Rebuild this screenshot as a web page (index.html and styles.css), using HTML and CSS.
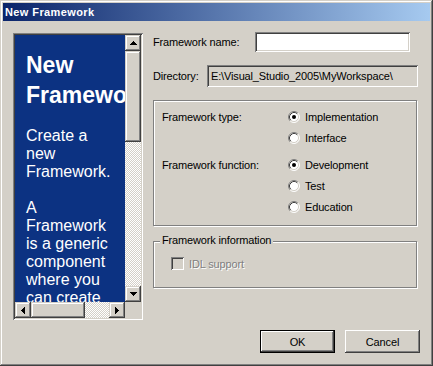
FILE: index.html
```html
<!DOCTYPE html>
<html>
<head>
<meta charset="utf-8">
<title>New Framework</title>
<link rel="stylesheet" href="styles.css">
</head>
<body>
<div class="window">
  <div class="titlebar"><span class="title">New Framework</span></div>
  <div class="client">
    <div class="main">
      <div class="preview">
        <div class="preview-view">
          <h1 class="preview-heading">New Framework</h1>
          <p class="preview-text">Create a new Framework.</p>
          <p class="preview-text">A Framework is a generic component where you can create</p>
        </div>
        <div class="vscroll">
          <div class="sb-btn"><svg width="7" height="4" viewBox="0 0 7 4"><path d="M3 0h1v1h1v1h1v1h1v1H0V3h1V2h1V1h1z"/></svg></div>
          <div class="sb-thumb vthumb"></div>
          <div class="sb-track"></div>
          <div class="sb-btn"><svg width="7" height="4" viewBox="0 0 7 4"><path d="M0 0h7v1H6v1H5v1H4v1H3V3H2V2H1V1H0z"/></svg></div>
        </div>
        <div class="hscroll">
          <div class="sb-btn"><svg width="4" height="7" viewBox="0 0 4 7"><path d="M3 0h1v7H3V6H2V5H1V4H0V3h1V2h1V1h1z"/></svg></div>
          <div class="sb-thumb hthumb"></div>
          <div class="sb-track"></div>
          <div class="sb-btn"><svg width="4" height="7" viewBox="0 0 4 7"><path d="M0 0h1v1h1v1h1v1h1v1H3v1H2v1H1v1H0z"/></svg></div>
        </div>
        <div class="sb-corner"></div>
      </div>
      <div class="form">
        <div class="field-row name-row">
          <span class="field-label name-label">Framework name:</span>
          <div class="textbox name-box"></div>
        </div>
        <div class="field-row dir-row">
          <span class="field-label dir-label">Directory:</span>
          <div class="textbox dir-box">E:\Visual_Studio_2005\MyWorkspace\</div>
        </div>
        <div class="group options">
          <div class="opt-section">
            <span class="opt-label">Framework type:</span>
            <div class="radio"><svg class="radio-icon" width="12" height="12" viewBox="0 0 12 12"><circle cx="6" cy="6" r="5" fill="#fff"/><path d="M2.11 9.89A5.5 5.5 0 0 1 9.89 2.11" stroke="#808080" fill="none"/><path d="M9.89 2.11A5.5 5.5 0 0 1 2.11 9.89" stroke="#fff" fill="none"/><path d="M2.82 9.18A4.5 4.5 0 0 1 9.18 2.82" stroke="#404040" fill="none"/><path d="M9.18 2.82A4.5 4.5 0 0 1 2.82 9.18" stroke="#d4d0c8" fill="none"/><circle cx="6" cy="6" r="2" fill="#000"/></svg><span>Implementation</span></div>
            <div class="radio"><svg class="radio-icon" width="12" height="12" viewBox="0 0 12 12"><circle cx="6" cy="6" r="5" fill="#fff"/><path d="M2.11 9.89A5.5 5.5 0 0 1 9.89 2.11" stroke="#808080" fill="none"/><path d="M9.89 2.11A5.5 5.5 0 0 1 2.11 9.89" stroke="#fff" fill="none"/><path d="M2.82 9.18A4.5 4.5 0 0 1 9.18 2.82" stroke="#404040" fill="none"/><path d="M9.18 2.82A4.5 4.5 0 0 1 2.82 9.18" stroke="#d4d0c8" fill="none"/></svg><span>Interface</span></div>
          </div>
          <div class="opt-section">
            <span class="opt-label">Framework function:</span>
            <div class="radio"><svg class="radio-icon" width="12" height="12" viewBox="0 0 12 12"><circle cx="6" cy="6" r="5" fill="#fff"/><path d="M2.11 9.89A5.5 5.5 0 0 1 9.89 2.11" stroke="#808080" fill="none"/><path d="M9.89 2.11A5.5 5.5 0 0 1 2.11 9.89" stroke="#fff" fill="none"/><path d="M2.82 9.18A4.5 4.5 0 0 1 9.18 2.82" stroke="#404040" fill="none"/><path d="M9.18 2.82A4.5 4.5 0 0 1 2.82 9.18" stroke="#d4d0c8" fill="none"/><circle cx="6" cy="6" r="2" fill="#000"/></svg><span>Development</span></div>
            <div class="radio"><svg class="radio-icon" width="12" height="12" viewBox="0 0 12 12"><circle cx="6" cy="6" r="5" fill="#fff"/><path d="M2.11 9.89A5.5 5.5 0 0 1 9.89 2.11" stroke="#808080" fill="none"/><path d="M9.89 2.11A5.5 5.5 0 0 1 2.11 9.89" stroke="#fff" fill="none"/><path d="M2.82 9.18A4.5 4.5 0 0 1 9.18 2.82" stroke="#404040" fill="none"/><path d="M9.18 2.82A4.5 4.5 0 0 1 2.82 9.18" stroke="#d4d0c8" fill="none"/></svg><span>Test</span></div>
            <div class="radio"><svg class="radio-icon" width="12" height="12" viewBox="0 0 12 12"><circle cx="6" cy="6" r="5" fill="#fff"/><path d="M2.11 9.89A5.5 5.5 0 0 1 9.89 2.11" stroke="#808080" fill="none"/><path d="M9.89 2.11A5.5 5.5 0 0 1 2.11 9.89" stroke="#fff" fill="none"/><path d="M2.82 9.18A4.5 4.5 0 0 1 9.18 2.82" stroke="#404040" fill="none"/><path d="M9.18 2.82A4.5 4.5 0 0 1 2.82 9.18" stroke="#d4d0c8" fill="none"/></svg><span>Education</span></div>
          </div>
        </div>
        <div class="group info">
          <span class="group-title">Framework information</span>
          <div class="check-row">
            <span class="checkbox"></span>
            <span class="check-label">IDL support</span>
          </div>
        </div>
      </div>
    </div>
    <div class="footer">
      <button class="btn btn-default">OK</button>
      <button class="btn">Cancel</button>
    </div>
  </div>
</div>
</body>
</html>
```

FILE: styles.css
```css
* { box-sizing: border-box; }

html, body {
  margin: 0;
  padding: 0;
  background: #d4d0c8;
}

body {
  font-family: "Liberation Sans", Arial, sans-serif;
  font-size: 11px;
  color: #000;
}

.window {
  width: 433px;
  height: 366px;
  padding: 3px;
  background: #d4d0c8;
  box-shadow: inset -1px -1px #404040, inset 1px 1px #d4d0c8, inset -2px -2px #808080, inset 2px 2px #fff;
  display: flex;
  flex-direction: column;
}

.titlebar {
  height: 18px;
  background: linear-gradient(to right, #0a246a, #a6caf0);
  display: flex;
  align-items: center;
  padding-left: 2px;
}

.title {
  color: #fff;
  font-weight: bold;
  font-size: 11px;
  letter-spacing: 0.4px;
  line-height: 13px;
}

.client {
  padding: 11px 10px 10px 10px;
  display: flex;
  flex-direction: column;
}

.main {
  display: flex;
  gap: 10px;
}

/* ---------- preview panel ---------- */
.preview {
  margin-top: 1px;
  width: 130px;
  height: 287px;
  padding: 2px;
  box-shadow: inset 1px 1px #808080, inset -1px -1px #fff, inset 2px 2px #404040, inset -2px -2px #d4d0c8;
  display: grid;
  grid-template-columns: 110px 16px;
  grid-template-rows: 267px 16px;
}

.preview-view {
  background: #0c3282;
  color: #fff;
  overflow: hidden;
  padding: 15px 0 0 11px;
}

.preview-heading {
  margin: 0 0 17px 0;
  width: 90px;
  font-size: 23px;
  line-height: 30px;
  font-weight: bold;
}

.preview-text {
  margin: 0 0 18px 0;
  width: 90px;
  font-size: 16px;
  line-height: 18px;
}

.vscroll {
  display: flex;
  flex-direction: column;
}

.hscroll {
  display: flex;
}

.sb-btn {
  flex: 0 0 16px;
  width: 16px;
  height: 16px;
  background: #d4d0c8;
  box-shadow: inset -1px -1px #404040, inset 1px 1px #d4d0c8, inset -2px -2px #808080, inset 2px 2px #fff;
  display: flex;
  align-items: center;
  justify-content: center;
}

.sb-btn svg {
  display: block;
  shape-rendering: crispEdges;
}

.sb-thumb {
  background: #d4d0c8;
  box-shadow: inset -1px -1px #404040, inset 1px 1px #d4d0c8, inset -2px -2px #808080, inset 2px 2px #fff;
}

.vthumb { flex: 0 0 91px; }
.hthumb { flex: 0 0 54px; }

.sb-track {
  flex: 1 1 auto;
  background-color: #d4d0c8;
  background-image: conic-gradient(#fff 25%, #d4d0c8 0 50%, #fff 0 75%, #d4d0c8 0);
  background-size: 2px 2px;
}

.sb-corner {
  background: #d4d0c8;
}

/* ---------- form ---------- */
.form {
  width: 267px;
  display: flex;
  flex-direction: column;
  letter-spacing: -0.15px;
}

.field-row {
  display: flex;
  align-items: center;
}

.name-row { height: 20px; }
.dir-row { height: 22px; margin-top: 13px; }

.name-label { width: 102px; }
.dir-label { width: 54px; }

.textbox {
  box-shadow: inset 1px 1px #808080, inset -1px -1px #fff, inset 2px 2px #404040, inset -2px -2px #d4d0c8;
}

.name-box {
  width: 155px;
  height: 20px;
  background: #fff;
}

.dir-box {
  width: 211px;
  height: 22px;
  line-height: 22px;
  padding-left: 4px;
  background: #d4d0c8;
  white-space: nowrap;
}

.group {
  width: 264px;
  border: 1px solid #808080;
  box-shadow: inset 1px 1px #fff, 1px 1px #fff;
}

.options {
  margin-top: 13px;
  padding: 5px 0 8px 8px;
}

.opt-section {
  display: grid;
  grid-template-columns: 126px 1fr;
  grid-auto-rows: 21px;
  align-items: center;
}

.opt-section + .opt-section { margin-top: 6px; }

.opt-label {
  grid-column: 1;
  grid-row: 1;
}

.radio {
  grid-column: 2;
  display: flex;
  align-items: center;
  gap: 5px;
}

.radio-icon { display: block; flex: 0 0 12px; }

.info {
  position: relative;
  margin-top: 15px;
  padding: 15px 0 17px 17px;
}

.group-title {
  position: absolute;
  top: -8px;
  left: 6px;
  padding: 0 2px;
  line-height: 13px;
  background: #d4d0c8;
}

.check-row {
  display: flex;
  align-items: center;
  gap: 5px;
  height: 13px;
}

.checkbox {
  width: 13px;
  height: 13px;
  background: #d4d0c8;
  box-shadow: inset 1px 1px #808080, inset -1px -1px #fff, inset 2px 2px #404040, inset -2px -2px #d4d0c8;
}

.check-label {
  color: #808080;
  text-shadow: 1px 1px #fff;
}

/* ---------- footer ---------- */
.footer {
  margin-top: 10px;
  display: flex;
  justify-content: flex-end;
  gap: 10px;
}

.btn {
  width: 75px;
  height: 23px;
  margin: 0;
  padding: 0;
  border: 0;
  background: #d4d0c8;
  font-family: "Liberation Sans", Arial, sans-serif;
  font-size: 11px;
  letter-spacing: -0.15px;
  color: #000;
  box-shadow: inset -1px -1px #404040, inset 1px 1px #fff, inset -2px -2px #808080, inset 2px 2px #d4d0c8;
}

.btn-default {
  border: 1px solid #000;
}
```
